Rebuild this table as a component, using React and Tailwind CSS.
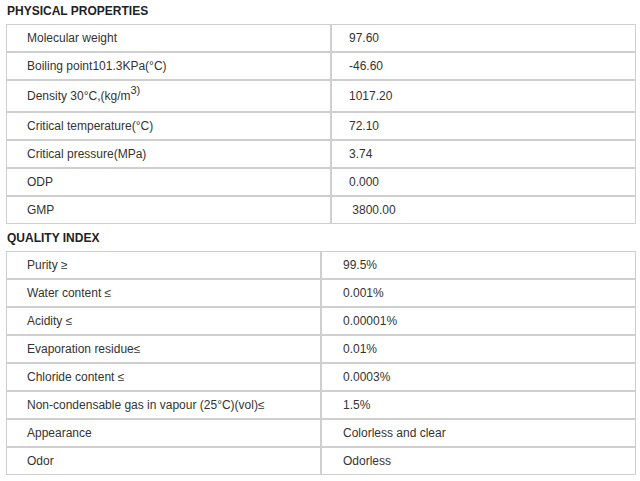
const physical = [
  { k: "Molecular weight", v: "97.60" },
  { k: "Boiling point101.3KPa(°C)", v: "-46.60" },
  {
    k: (
      <>
        Density 30°C,(kg/m<sup className="text-[11px] align-super leading-none">3)</sup>
      </>
    ),
    v: "1017.20",
    tall: true,
  },
  { k: "Critical temperature(°C)", v: "72.10" },
  { k: "Critical pressure(MPa)", v: "3.74" },
  { k: "ODP", v: "0.000" },
  { k: "GMP", v: "\u00a03800.00" },
];

const quality = [
  { k: "Purity ≥", v: "99.5%" },
  { k: "Water content ≤", v: "0.001%" },
  { k: "Acidity ≤", v: "0.00001%" },
  { k: "Evaporation residue≤", v: "0.01%" },
  { k: "Chloride content ≤", v: "0.0003%" },
  { k: "Non-condensable gas in vapour (25°C)(vol)≤", v: "1.5%" },
  { k: "Appearance", v: "Colorless and clear" },
  { k: "Odor", v: "Odorless" },
];

function Table({ rows, narrow }) {
  return (
    <div className="ml-[6px] w-[630px] border border-[#cfcfcf] flex flex-col">
      {rows.map((r, i) => (
        <div
          key={i}
          className={`flex ${
            i === 0 ? "h-[26px]" : r.tall ? "h-[32px] border-t-2 border-[#cfcfcf]" : "h-[28px] border-t-2 border-[#cfcfcf]"
          }`}
        >
          <div
            className={`${narrow ? "w-[315px]" : "w-[325px]"} shrink-0 flex items-center pl-[20px] border-r-2 border-[#cfcfcf]`}
          >
            {r.k}
          </div>
          <div
            className={`flex-1 flex items-center ${narrow ? "pl-[21px]" : "pl-[17px]"}`}
          >
            {r.v}
          </div>
        </div>
      ))}
    </div>
  );
}

export default function App() {
  return (
    <div
      className="w-[640px] h-[481px] bg-white text-[12px] text-[#333] overflow-hidden"
      style={{ fontFamily: '"Liberation Sans", Arial, sans-serif' }}
    >
      <div className="h-[24px] pt-[4px] pl-[7px] font-bold text-[#222] leading-[14px]">
        PHYSICAL PROPERTIES
      </div>
      <Table rows={physical} />
      <div className="h-[27px] pt-[7px] pl-[7px] font-bold text-[#222] leading-[14px]">
        QUALITY INDEX
      </div>
      <Table rows={quality} narrow />
    </div>
  );
}
